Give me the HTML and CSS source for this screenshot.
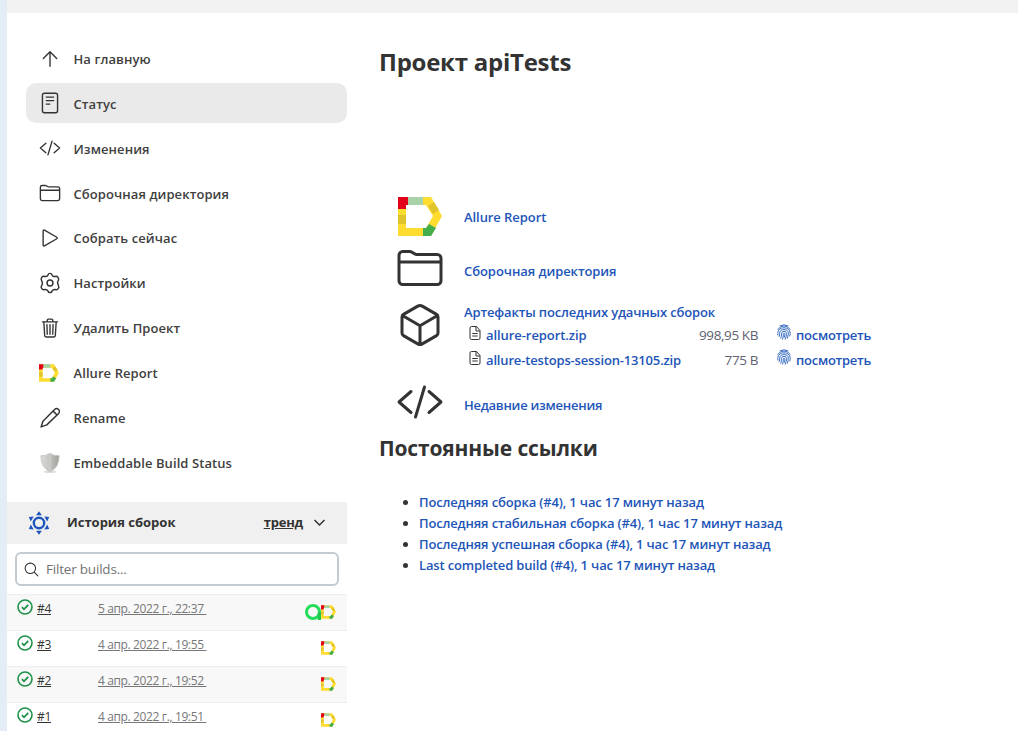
FILE: index.html
```html
<!DOCTYPE html>
<html lang="ru">
<head>
<meta charset="utf-8">
<title>apiTests</title>
<link rel="stylesheet" href="styles.css">
</head>
<body>
<svg class="defs" aria-hidden="true">
  <symbol id="up" viewBox="0 0 512 512"><path class="ln" d="M100 244l156-156 156 156M256 108v316"/></symbol>
  <symbol id="doc" viewBox="0 0 512 512"><rect class="ln" x="80" y="28" width="352" height="456" rx="48"/><path class="ln" d="M170 118h172M170 200h172M170 282h80"/></symbol>
  <symbol id="code" viewBox="0 0 512 512"><path class="ln" d="M160 368L32 256l128-112M352 368l128-112-128-112M304 96l-96 320"/></symbol>
  <symbol id="folder" viewBox="0 0 512 512"><path class="ln" d="M440 432H72a40 40 0 0 1-40-40V120a40 40 0 0 1 40-40h75.890a40 40 0 0 1 22.190 6.720l27.840 18.560a40 40 0 0 0 22.190 6.720H440a40 40 0 0 1 40 40v240a40 40 0 0 1-40 40zM32 192h448"/></symbol>
  <symbol id="play" viewBox="0 0 512 512"><path class="ln" d="M96 91v330c0 17.440 17 28.520 31 20.160l287.900-168.370c12.120-7.250 12.120-26.330 0-33.580L127 70.840c-14-8.360-31 2.720-31 20.160z"/></symbol>
  <symbol id="gear" viewBox="0 0 24 24"><path class="ln1" d="M9.700 3.300Q10.200 1.500 12 1.500T14.300 3.300Q15.500 5.400 17.700 4.900Q19.600 4.300 20.700 5.800T21.300 8.900Q19.900 10.600 20.300 12T21.300 15.100Q22.200 16.500 21 18.200T17.700 19.100Q15.500 18.600 14.300 20.700Q13.800 22.500 12 22.500T9.700 20.700Q8.500 18.600 6.300 19.100Q4.200 19.900 3 18.200T2.700 15.100Q4 13.400 3.700 12T2.700 8.900Q1.800 7.500 3 5.800T6.300 4.900Q8.500 5.400 9.700 3.300z"/><circle class="ln1" cx="12" cy="12" r="3.200"/></symbol>
  <symbol id="trash" viewBox="0 0 512 512"><path class="ln" d="M112 112l20 320c.95 18.490 14.400 32 32 32h184c17.670 0 30.870-13.510 32-32l20-320M80 112h352M192 112V72a24 24 0 0 1 24-24h80a24 24 0 0 1 24 24v40M256 176v224M184 176l8 224M328 176l-8 224"/></symbol>
  <symbol id="pencil" viewBox="0 0 24 24"><path class="ln1" d="M2.300 21.700L4.300 15.500 17 2.800A2.900 2.900 0 0 1 21.400 7L8.500 19.500zM15.500 4.500l4.200 4.200"/></symbol>
  <symbol id="cube" viewBox="0 0 512 512"><path class="ln" d="M448 341.370V170.610A32 32 0 0 0 432.110 143l-152-88.460a47.940 47.940 0 0 0-48.240 0L79.890 143A32 32 0 0 0 64 170.610v170.760A32 32 0 0 0 79.890 369l152 88.460a48 48 0 0 0 48.240 0l152-88.460A32 32 0 0 0 448 341.370zM69 153.990l187 110 187-110M256 463.990v-200"/></symbol>
  <symbol id="search" viewBox="0 0 512 512"><path class="ln" d="M221 64a157 157 0 1 0 157 157A157 157 0 0 0 221 64zM338 338l110 110"/></symbol>
  <symbol id="allure" viewBox="0 0 44 39"><path fill="#ffdc30" fill-rule="evenodd" d="M0 0h33l11 19-11 20H0zM8 8v23h20l7-12-7-11z"/><path fill="#e2001a" d="M0 0h10v8H8v4H0z"/><path fill="#a8d3a8" d="M10 0h15v8H10z"/><path fill="#dfc42e" d="M0 18h8v9H0zM30 9l6-4 5 8-6 4z"/><path fill="#44ad4c" d="M25 39v-8h3l3-4 7 4-5 8z"/></symbol>
  <symbol id="check" viewBox="0 0 16 16"><circle cx="8" cy="8" r="7" fill="none" stroke="#1e9048" stroke-width="1.600"/><path d="M4.900 8.200l2.100 2.100 4.200-4.500" fill="none" stroke="#1e9048" stroke-width="1.800"/></symbol>
  <symbol id="file" viewBox="0 0 12 16"><path d="M2.500 1.500h5l3.500 4v7.500q0 1.500-1.500 1.500h-7Q1 14.500 1 13V3q0-1.500 1.500-1.500zM7 1.500V6h4M3.300 8.500h5.400M3.300 11h5.400" fill="none" stroke="#333"/></symbol>
  <symbol id="finger" viewBox="0 0 14 16"><g fill="none" stroke="#2e66bd" stroke-width=".95" stroke-linecap="round"><path d="M3 1.800Q7-.2 11 1.800M.8 5.500Q3 2 7 2t6.200 3.500M.8 11Q.8 9 .9 8.500Q1.500 3.800 7 3.800T13.200 9q0 2-.4 3M2.200 12.500q.6-1.500.5-3.300Q2.700 5.600 7 5.600t4.300 3.600q0 3-1 5M3.800 14.200q.8-2 .7-4.500Q4.500 7.300 7 7.300t2.500 2.300q0 3-1.300 5.600M5.600 15.200q.8-2 .7-5 0-1.100.7-1.100t.8 1.100q0 1.500-.4 3"/></g></symbol>
  <symbol id="shield" viewBox="0 0 24 24"><defs><linearGradient id="sg"><stop offset="0" stop-color="#dcddd9"/><stop offset=".5" stop-color="#c3c4bf"/><stop offset="1" stop-color="#9fa09c"/></linearGradient></defs><ellipse cx="12" cy="21.500" rx="7" ry="1.500" fill="#ddd"/><path d="M12 1.500q4.500 3 10 2.500-.2 13.500-10 17.500Q2.200 17.500 2 4q5.500.5 10-2.500z" fill="url(#sg)" stroke="#bcbdb8" stroke-width=".8"/><path d="M12 3v18" stroke="#dcdcd8" stroke-width=".6"/></symbol>
  <symbol id="sun" viewBox="0 0 24 24"><circle cx="12" cy="12" r="5.200" fill="none" stroke="#1d55bd" stroke-width="2.400"/><g fill="#1d55bd"><path id="ray" d="M12 .2l2.900 4H9.100z"/><use href="#ray" transform="rotate(60 12 12)"/><use href="#ray" transform="rotate(120 12 12)"/><use href="#ray" transform="rotate(180 12 12)"/><use href="#ray" transform="rotate(240 12 12)"/><use href="#ray" transform="rotate(300 12 12)"/></g></symbol>
  <symbol id="testops" viewBox="0 0 16 16"><circle cx="8" cy="8" r="6.500" fill="none" stroke="#24dd5a" stroke-width="3"/><path d="M12.800 8v8H16V8z" fill="#20c850"/></symbol>
</svg>
<div class="topbar"></div>
<div class="page">
  <aside class="side">
    <nav class="tasks">
      <a class="task"><svg class="ic"><use href="#up"/></svg><span>На главную</span></a>
      <a class="task active"><svg class="ic"><use href="#doc"/></svg><span>Статус</span></a>
      <a class="task"><svg class="ic"><use href="#code"/></svg><span>Изменения</span></a>
      <a class="task"><svg class="ic"><use href="#folder"/></svg><span>Сборочная директория</span></a>
      <a class="task"><svg class="ic"><use href="#play"/></svg><span>Собрать сейчас</span></a>
      <a class="task"><svg class="ic"><use href="#gear"/></svg><span>Настройки</span></a>
      <a class="task"><svg class="ic"><use href="#trash"/></svg><span>Удалить Проект</span></a>
      <a class="task"><svg class="ic allure-s"><use href="#allure"/></svg><span>Allure Report</span></a>
      <a class="task"><svg class="ic"><use href="#pencil"/></svg><span>Rename</span></a>
      <a class="task"><svg class="ic"><use href="#shield"/></svg><span>Embeddable Build Status</span></a>
    </nav>
    <section class="history">
      <div class="hist-head"><svg class="sun"><use href="#sun"/></svg><b>История сборок</b><a class="trend">тренд</a><svg class="chev" viewBox="0 0 12 8"><path d="M1 1l5 5 5-5" fill="none" stroke="#333" stroke-width="1.500"/></svg></div>
      <div class="filter"><div class="box"><svg><use href="#search"/></svg><span>Filter builds...</span></div></div>
      <div class="row odd"><svg class="ok"><use href="#check"/></svg><a class="num">#4</a><a class="date">5 апр. 2022 г., 22:37&nbsp;</a><svg class="to"><use href="#testops"/></svg><svg class="al"><use href="#allure"/></svg></div>
      <div class="row"><svg class="ok"><use href="#check"/></svg><a class="num">#3</a><a class="date">4 апр. 2022 г., 19:55&nbsp;</a><svg class="al"><use href="#allure"/></svg></div>
      <div class="row odd"><svg class="ok"><use href="#check"/></svg><a class="num">#2</a><a class="date">4 апр. 2022 г., 19:52&nbsp;</a><svg class="al"><use href="#allure"/></svg></div>
      <div class="row"><svg class="ok"><use href="#check"/></svg><a class="num">#1</a><a class="date">4 апр. 2022 г., 19:51&nbsp;</a><svg class="al"><use href="#allure"/></svg></div>
    </section>
  </aside>
  <main class="main">
    <h1>Проект apiTests</h1>
    <div class="links">
      <div class="item i1"><svg class="big-allure"><use href="#allure"/></svg><a class="t-allure">Allure Report</a></div>
      <div class="item i2"><svg class="big"><use href="#folder"/></svg><a class="t-dir">Сборочная директория</a></div>
      <div class="item i3"><svg class="big"><use href="#cube"/></svg>
        <div class="arts">
          <a class="t-art">Артефакты последних удачных сборок</a>
          <div class="art"><svg class="fi"><use href="#file"/></svg><a class="f1">allure-report.zip</a><span class="size">998,95 KB</span><svg class="fp"><use href="#finger"/></svg><a class="view">посмотреть</a></div>
          <div class="art"><svg class="fi"><use href="#file"/></svg><a class="f2">allure-testops-session-13105.zip</a><span class="size">775 B</span><svg class="fp"><use href="#finger"/></svg><a class="view">посмотреть</a></div>
        </div>
      </div>
      <div class="item i4"><svg class="big"><use href="#code"/></svg><a class="t-rec">Недавние изменения</a></div>
    </div>
    <h2>Постоянные ссылки</h2>
    <ul class="perma">
      <li><a>Последняя сборка (#4), 1 час 17 минут назад</a></li>
      <li><a>Последняя стабильная сборка (#4), 1 час 17 минут назад</a></li>
      <li><a>Последняя успешная сборка (#4), 1 час 17 минут назад</a></li>
      <li><a>Last completed build (#4), 1 час 17 минут назад</a></li>
    </ul>
  </main>
</div>
</body>
</html>
```
FILE: styles.css
```css
* { box-sizing: border-box; }
body { margin: 0; height: 731px; overflow: hidden; background: #fff; border-left: 7px solid #e4ecf5; color: #333; font-family: "Open Sans", "Noto Sans", sans-serif; font-size: 13px; font-weight: 500; white-space: nowrap; }
.defs { position: absolute; width: 0; height: 0; }
svg { flex: none; display: block; }
.ln { fill: none; stroke: #333; stroke-width: 32; stroke-linecap: round; stroke-linejoin: round; }
.ln1 { fill: none; stroke: #333; stroke-width: 1.6; stroke-linecap: round; stroke-linejoin: round; }
.topbar { height: 13px; background: #f2f2f2; }
.page { display: flex; height: 718px; }
.side { width: 340px; flex: none; }
.tasks { display: flex; flex-direction: column; gap: 4.9px; padding: 25px 0 0 19px; height: 489px; }
.task { height: 40px; flex: none; display: flex; align-items: center; gap: 12.5px; padding-left: 13px; border-radius: 10px; line-height: 20px; }
.task.active { background: #eaeaea; }
.task span { padding-top: 1.8px; letter-spacing: 0.08px; font-weight: 600; color: #404040; }
.ic { width: 22px; height: 22px; margin-top: 1px; }
.allure-s { width: 20px; height: 18px; margin: 1px 2px 0 0; }
.hist-head { height: 42px; background: #f0f0f0; display: flex; align-items: center; padding: 0 21px 0 20px; }
.hist-head b { margin: -2px 0 0 16px; font-weight: 700; }
.sun { width: 24px; height: 24px; }
.trend { margin: -2px 10px 0 auto; font-weight: 700; text-decoration: underline; letter-spacing: -0.2px; }
.chev { width: 13px; height: 8px; }
.filter { height: 50px; padding: 8px; }
.box { width: 324px; height: 34px; border: 2px solid #c3cad0; border-radius: 6px; display: flex; align-items: center; padding-left: 6px; gap: 6px; font-weight: 400; color: #737373; font-size: 13.5px; letter-spacing: -0.2px; }
.box svg { width: 17px; height: 17px; }
.row { height: 36px; border-top: 1px solid #eee; display: flex; align-items: flex-start; padding: 4px 11px 0 10px; font-size: 12px; line-height: 20px; }
.odd { background: #f8f8f8; }
.row a { text-decoration: underline; }
.ok { width: 16px; height: 16px; }
.num { width: 61px; margin-left: 4px; font-weight: 400; letter-spacing: -0.3px; }
.date { color: #777; font-weight: 400; margin-right: auto; letter-spacing: -0.37px; }
.al { width: 15px; height: 14px; margin-top: 6px; }
.to { width: 16px; height: 16px; margin-top: 5px; }
.main { padding-left: 32px; }
h1, h2 { margin: 0; font-weight: 700; }
h1 { font-size: 24px; line-height: 34px; margin-top: 32px; letter-spacing: -0.25px; }
h2 { font-size: 21px; line-height: 30px; letter-spacing: -0.15px; }
.links { padding: 115px 0 0 17px; height: 354px; }
.main a { color: #1d55b8; font-weight: 600; letter-spacing: -0.07px; }
.item { display: flex; align-items: center; }
.i1 { height: 45px; }
.i2 { height: 63px; }
.i2 svg.big { margin-top: -6px; }
.i3 { height: 72px; align-items: flex-start; }
.i3 svg.big { margin-top: -1px; }
.i4 { height: 61px; }
.i4 svg.big { margin-top: -6px; }
.item svg.big { width: 48px; height: 48px; margin-right: 20px; }
.big-allure { width: 44px; height: 39px; margin: 0 22px 0 2px; }
.arts > a { display: block; line-height: 20px; }
.main .t-art { letter-spacing: -0.15px; }
.main .t-rec { letter-spacing: -0.25px; }
.main .f2 { letter-spacing: -0.16px; }
.art { width: 407px; display: flex; height: 25px; align-items: center; padding-left: 5px; }
.fi { width: 12px; height: 16px; margin: -3px 5px 0 0; }
.fp { width: 14px; height: 16px; margin: -6px 5px 0 19px; }
.main .view { letter-spacing: -0.25px; width: 75px; }
.size { margin-left: auto; font-size: 13.5px; font-weight: 400; color: #5f6370; letter-spacing: -0.4px; }
.perma { margin: 29px 0 0; padding-left: 40px; line-height: 21px; }
.main .perma a { letter-spacing: -0.15px; }
```
